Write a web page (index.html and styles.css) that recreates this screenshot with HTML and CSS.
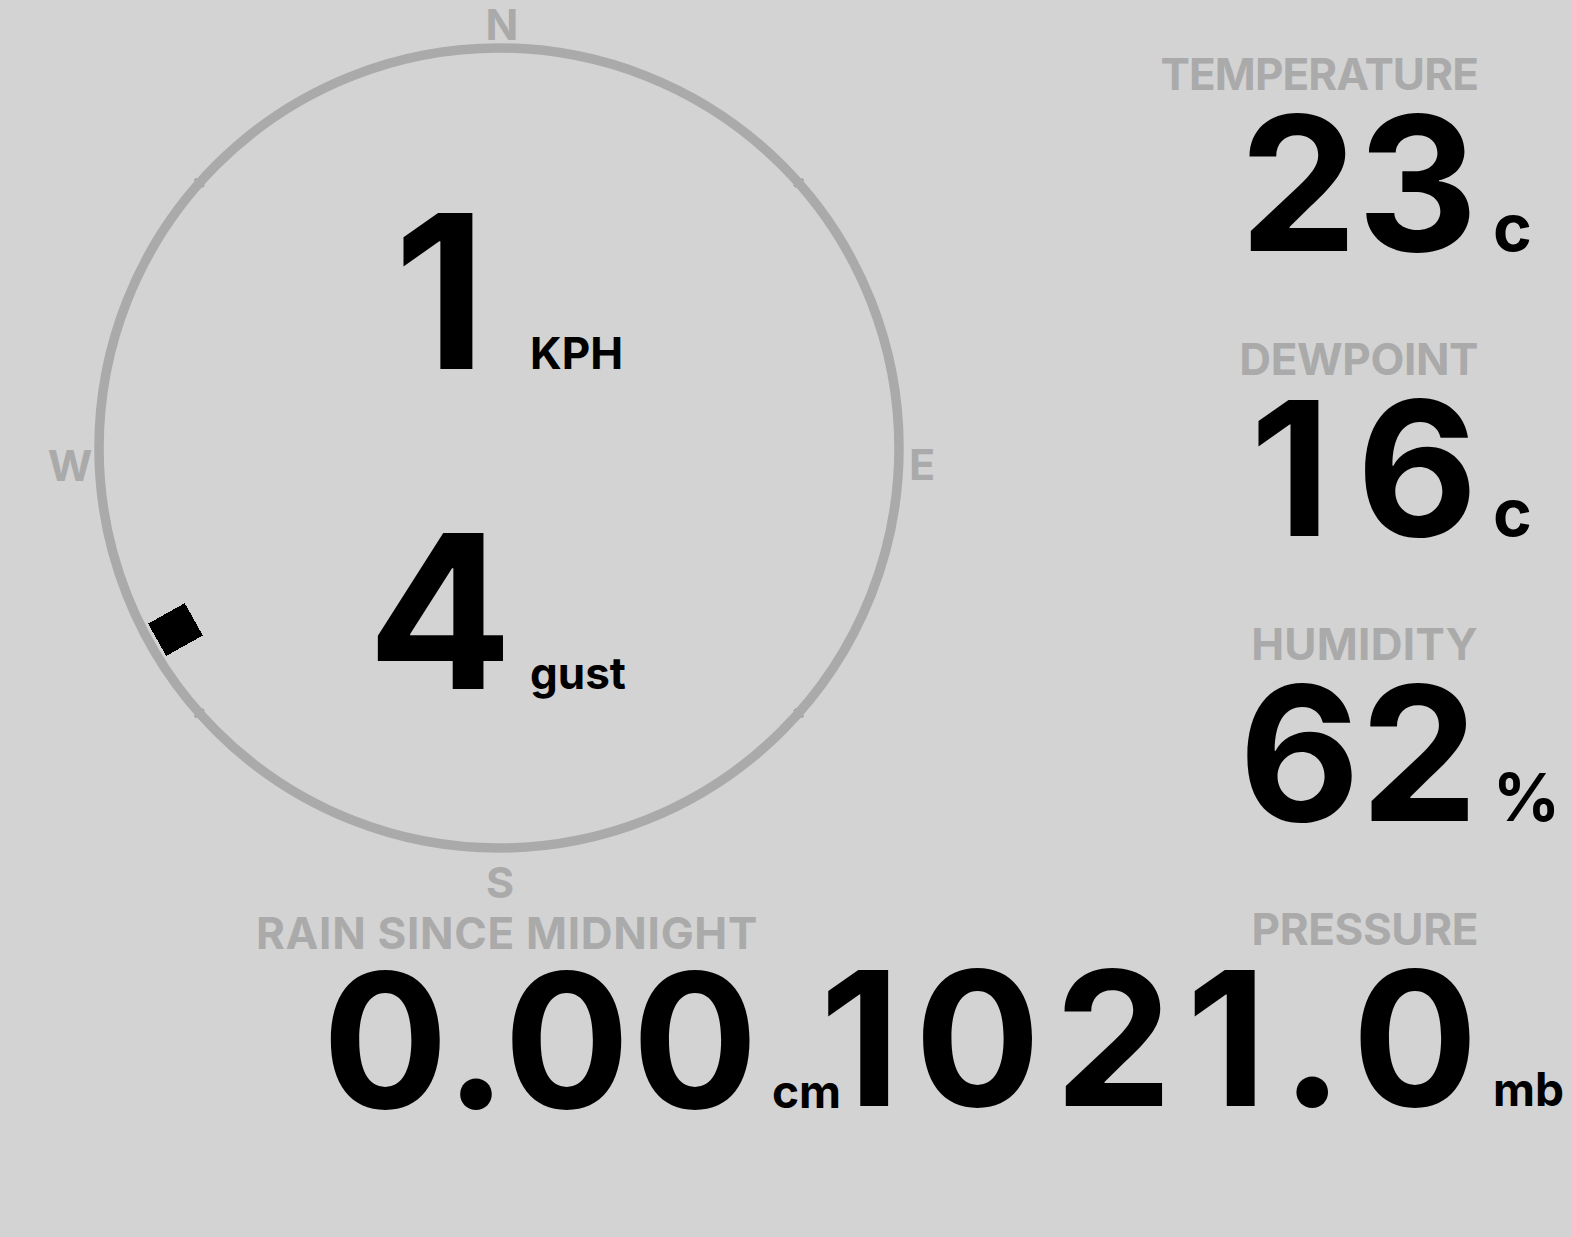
FILE: index.html
```html
<!DOCTYPE html>
<html lang="en">
<head>
<meta charset="utf-8">
<title>Weather</title>
<link rel="stylesheet" href="styles.css">
</head>
<body>
<main class="page">
  <section class="compass">
    <svg class="dial" width="1000" height="905" viewBox="0 0 1000 905">
      <circle class="ring" cx="499" cy="448" r="400"/>
      <g transform="translate(499 448)">
        <line class="tick" x1="0" y1="-394" x2="0" y2="-406" transform="rotate(48.5)"/>
        <line class="tick" x1="0" y1="-394" x2="0" y2="-406" transform="rotate(131.5)"/>
        <line class="tick" x1="0" y1="-394" x2="0" y2="-406" transform="rotate(228.5)"/>
        <line class="tick" x1="0" y1="-394" x2="0" y2="-406" transform="rotate(311.5)"/>
        <rect class="pointer" x="-18.5" y="-392" width="37" height="42" transform="rotate(240.7)"/>
      </g>
      <text class="cardinal" x="502" y="40">N</text>
      <text class="cardinal" x="922" y="480">E</text>
      <text class="cardinal" x="500" y="898">S</text>
      <text class="cardinal" x="70" y="481">W</text>
    </svg>
    <div class="readings">
      <div class="reading">
        <span class="speed">1</span>
        <span class="speed-unit">KPH</span>
      </div>
      <div class="reading">
        <span class="speed">4</span>
        <span class="speed-unit">gust</span>
      </div>
    </div>
  </section>

  <section class="stats">
    <div class="stat">
      <div class="label tight">TEMPERATURE</div>
      <div class="row"><span class="value">23</span><span class="unit">c</span></div>
    </div>
    <div class="stat">
      <div class="label">DEWPOINT</div>
      <div class="row"><span class="value spaced">16</span><span class="unit">c</span></div>
    </div>
    <div class="stat">
      <div class="label loose">HUMIDITY</div>
      <div class="row"><span class="value">62</span><span class="unit">%</span></div>
    </div>
  </section>

  <section class="bottom">
    <div class="stat rain">
      <div class="label">RAIN SINCE MIDNIGHT</div>
      <div class="row"><span class="value">0.00</span><span class="unit small">cm</span></div>
    </div>
    <div class="stat pressure">
      <div class="label">PRESSURE</div>
      <div class="row"><span class="value">1021.0</span><span class="unit small">mb</span></div>
    </div>
  </section>
</main>
</body>
</html>
```

FILE: styles.css
```css
html, body {
  margin: 0;
  padding: 0;
  background: #d3d3d3;
}

body {
  font-family: Inter, "Noto Sans", "DejaVu Sans", sans-serif;
  font-weight: 700;
  color: #000;
}

.page {
  width: 1571px;
  height: 1237px;
  display: grid;
  grid-template-columns: 1000px 1fr;
  grid-template-rows: 285px 285px 285px 1fr;
  overflow: hidden;
}

/* ---------- compass ---------- */
.compass {
  grid-column: 1;
  grid-row: 1 / span 3;
  display: grid;
  height: 905px;
  margin-bottom: -50px;
}

.compass > * {
  grid-area: 1 / 1;
}

.dial {
  display: block;
  overflow: visible;
}

.ring {
  fill: none;
  stroke: #aaa;
  stroke-width: 9.5;
}

.tick {
  stroke: #aaa;
  stroke-width: 4;
  shape-rendering: crispEdges;
}

.pointer {
  fill: #000;
  shape-rendering: crispEdges;
}

.cardinal {
  font-family: Inter, "Noto Sans", sans-serif;
  font-weight: 700;
  font-size: 43px;
  fill: #aaa;
  text-anchor: middle;
}

.readings {
  display: flex;
  flex-direction: column;
  gap: 103px;
  padding-top: 183px;
}

.reading {
  display: grid;
  grid-template-columns: 180px auto;
  align-items: baseline;
  margin-left: 350px;
}

.speed {
  font-size: 215px;
  line-height: 217px;
  justify-self: center;
}

.speed-unit {
  font-size: 44px;
  line-height: 44px;
}

/* ---------- stats ---------- */
.stats {
  grid-column: 2;
  grid-row: 1 / span 3;
  display: grid;
  grid-template-rows: 285px 285px 285px;
}

.stat {
  display: flex;
  flex-direction: column;
  align-items: flex-end;
  white-space: nowrap;
  min-width: 0;
}

.label {
  font-size: 44px;
  line-height: 44px;
  margin-top: 52px;
  margin-right: 93px;
  color: #aaa;
  letter-spacing: -0.4px;
}

.label.tight {
  letter-spacing: -0.9px;
}

.label.loose {
  letter-spacing: 0.3px;
}

.row {
  display: flex;
  align-items: baseline;
  margin-top: -6px;
}

.value {
  font-size: 187px;
  line-height: 187px;
}

.value.spaced {
  letter-spacing: 26px;
  margin-right: -26px;
}

.unit {
  width: 78px;
  margin-left: 15px;
  font-size: 66px;
  line-height: 66px;
}

.unit.small {
  font-size: 46px;
  line-height: 46px;
}

/* ---------- bottom row ---------- */
.bottom {
  grid-column: 1 / -1;
  grid-row: 4;
  display: flex;
}

.rain {
  width: 822px;
  flex: none;
}

.rain .label {
  margin-top: 56px;
  margin-right: 64px;
  letter-spacing: 0.7px;
}

.rain .row {
  margin-top: -8px;
}

.rain .value {
  letter-spacing: 2px;
  margin-right: -2px;
}

.rain .unit {
  width: 50px;
  margin-left: 14px;
}

.pressure {
  flex: 1 1 0;
  min-width: 0;
}

.pressure .value {
  letter-spacing: 14px;
  margin-right: -14px;
}
```
